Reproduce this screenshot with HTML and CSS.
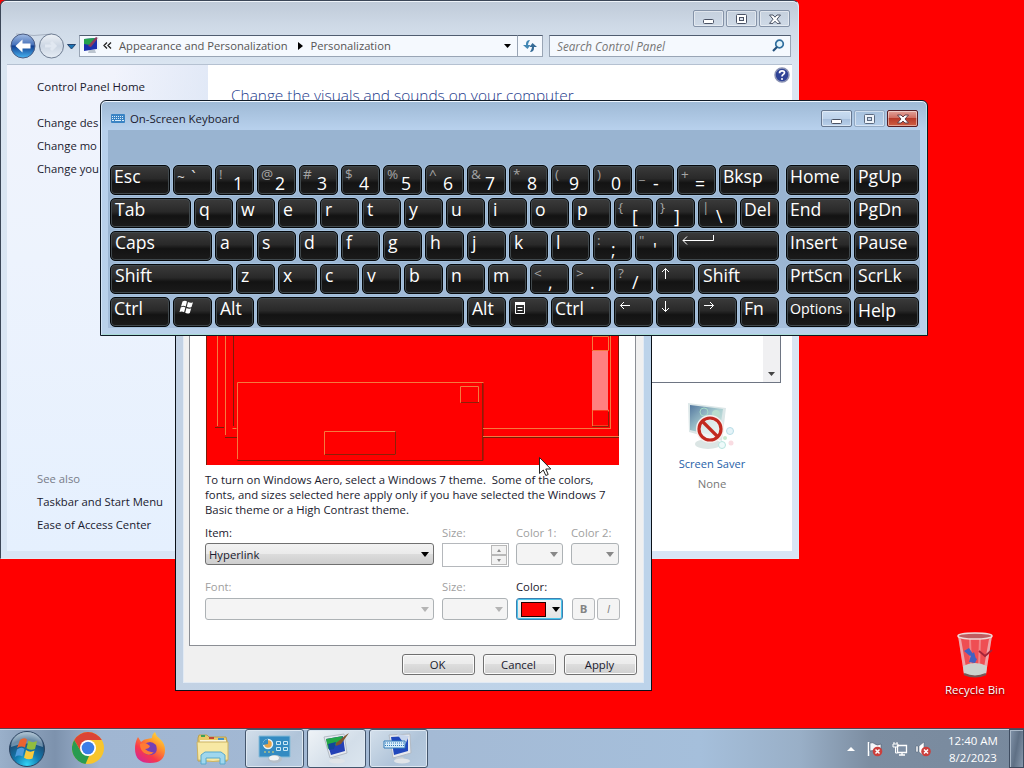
FILE: index.html
```html
<!DOCTYPE html>
<html lang="en">
<head>
    <meta charset="UTF-8">
    <meta name="viewport" content="width=device-width, initial-scale=1.0">
    <title>Desktop</title>
    <link rel="stylesheet" href="styles.css">
</head>
<body>
<div class="desktop">

    <!-- Control Panel -->
    <div class="window control-panel">
        <div class="cp-title">
            <div class="win-btn"><svg width="29" height="17"><rect x="9.5" y="8.5" width="10" height="4" rx="1" fill="#fff" stroke="#4a5264"/></svg></div>
            <div class="win-btn"><svg width="29" height="17"><rect x="9.5" y="3.5" width="10" height="9" rx="1" fill="#fff" stroke="#4a5264"/><rect x="12.5" y="6.5" width="4" height="3" fill="#dde4ee" stroke="#4a5264"/></svg></div>
            <div class="win-btn"><svg width="29" height="17"><path d="M9.5 4h3.500l2 2.200 2-2.200h3.500l-3.500 4.200 3.500 4.200h-3.500l-2-2.200-2 2.200h-3.500l3.500-4.200z" fill="#fff" stroke="#4a5264"/></svg></div>
        </div>
        <div class="cp-nav">
            <svg class="nav-arrows" width="70" height="28" viewBox="0 0 70 28">
                <defs>
                    <linearGradient id="back" x1="0" y1="0" x2="0" y2="1"><stop offset="0" stop-color="#a3bce4"/><stop offset=".45" stop-color="#4772ba"/><stop offset=".5" stop-color="#123f91"/><stop offset="1" stop-color="#49b5f2"/></linearGradient>
                    <linearGradient id="fwd" x1="0" y1="0" x2="0" y2="1"><stop offset="0" stop-color="#eef2f7"/><stop offset=".5" stop-color="#ccd6e3"/><stop offset="1" stop-color="#e6edf5"/></linearGradient>
                </defs>
                <path d="M8 2q18 3 36 0" fill="none" stroke="#a7b2c2"/>
                <circle cx="15" cy="14" r="12" fill="url(#back)" stroke="#4c5d83"/>
                <path d="M7.500 14l7-6.500v4h8v5h-8v4z" fill="#fff"/>
                <circle cx="43.500" cy="14" r="12" fill="url(#fwd)" stroke="#6f7d92"/>
                <path d="M37 14h10m-4-4l4 4-4 4" fill="none" stroke="#e1e8f1" stroke-width="3"/>
                <path d="M59.500 12.500h8l-4 4.500z" fill="#1b75b5" stroke="#27456f"/>
            </svg>
            <div class="address">
                <svg width="18" height="18" viewBox="0 0 18 18"><path d="M1 2l13-1v11l-13 2z" fill="#1a2fae"/><path d="M1 2l11-1-5 7-6-1z" fill="#24a24e"/><path d="M5 9l8-9 2 1-7 9z" fill="#8b3a5c"/><path d="M6 13h6l1 3h-8z" fill="#bcc5cf"/><path d="M15 0v13" stroke="#e4e8ef"/></svg>
                <svg class="chev" width="9" height="7"><path d="M4 0.500L1 3.500l3 3M8 0.500L5 3.500l3 3" fill="none" stroke="#222" stroke-width="1.300"/></svg>
                <span class="crumb">Appearance and Personalization</span>
                <svg class="tri" width="5" height="8"><path d="M0 0l5 4-5 4z"/></svg>
                <span class="crumb">Personalization</span>
                <svg class="drop" width="7" height="4"><path d="M0 0h7l-3.500 4z"/></svg>
            </div>
            <div class="refresh"><svg width="16" height="14" viewBox="0 0 16 14"><path d="M8 1q-4 0-4 4v1h-3l4.500 4 3-4h-2.500q0-2 2-5z" fill="#4287b4"/><path d="M8 13q4 0 4-4v-1h3l-4.500-4-3 4h2.500q0 2-2 5z" fill="#356b97"/></svg></div>
            <div class="search">
                <span>Search Control Panel</span>
                <svg width="13" height="13" viewBox="0 0 13 13"><circle cx="7.500" cy="5" r="3.800" fill="#e3f4fb" stroke="#2f6e9e" stroke-width="1.700"/><path d="M5 8l-4 4" stroke="#24507c" stroke-width="2.200"/></svg>
            </div>
        </div>
        <div class="cp-body">
            <div class="side">
                <a class="home">Control Panel Home</a>
                <a>Change des</a>
                <a>Change mo</a>
                <a>Change you</a>
                <div class="see-also">See also</div>
                <a>Taskbar and Start Menu</a>
                <a>Ease of Access Center</a>
            </div>
            <div class="main">
                <svg class="help" width="16" height="16" viewBox="0 0 16 16"><circle cx="8" cy="8" r="7" fill="#2f4396" stroke="#8b93b4" stroke-width="1.500"/><path d="M5.500 6.300q0-2.500 2.500-2.500t2.500 2q0 1-1.300 1.800-1.200.7-1.200 1.900" fill="none" stroke="#fff" stroke-width="1.700"/><circle cx="8" cy="12" r="1" fill="#fff"/></svg>
                <h1>Change the visuals and sounds on your computer</h1>
                <div class="themes"><div class="themes-scroll"><svg width="7" height="4"><path d="M0 0h7l-3.500 4z" fill="#444"/></svg></div></div>
                <div class="saver">
                    <svg width="50" height="50" viewBox="0 0 50 50">
                        <defs><linearGradient id="scr" x1="0" y1="0" x2="1" y2="1"><stop offset="0" stop-color="#54789f"/><stop offset=".5" stop-color="#a9cdd0"/><stop offset="1" stop-color="#dff0e8"/></linearGradient></defs>
                        <path d="M1 1l38 5-4 33-33-9z" fill="#dce7e8"/>
                        <path d="M3 3l33 4-4 28-29-7z" fill="url(#scr)"/>
                        <ellipse cx="21" cy="42" rx="13" ry="5" fill="#dbe5e4"/>
                        <circle cx="17" cy="10" r="4" fill="none" stroke="#a4dac6"/><circle cx="29" cy="12" r="4" fill="#b8ddcd"/>
                        <circle cx="43" cy="29" r="3.500" fill="#e4f3f8" stroke="#b8dde6"/><circle cx="35" cy="43" r="3.500" fill="#eefafa" stroke="#b8e5df"/><circle cx="44" cy="41" r="2.500" fill="#f9dce2"/><circle cx="38" cy="36" r="2" fill="#c8e9cf"/>
                        <circle cx="23" cy="27" r="11.500" fill="#fff" fill-opacity=".55" stroke="#f6efed" stroke-width="5"/>
                        <circle cx="23" cy="27" r="11" fill="none" stroke="#c22a20" stroke-width="3.200"/>
                        <path d="M15 19l16 16" stroke="#c22a20" stroke-width="3.200"/>
                    </svg>
                    <a>Screen Saver</a>
                    <span>None</span>
                </div>
            </div>
        </div>
    </div>

    <!-- Window Color and Appearance -->
    <div class="window dialog">
        <div class="dlg-client">
            <div class="tab-page">
                <svg class="preview" width="413" height="329" viewBox="206 136 413 329">
                    <rect x="206" y="136" width="413" height="329" fill="#f00"/>
                    <g fill="none" stroke="#7b1b08">
                        <path d="M206.500 136v329M233.500 136v290M215 427.500h9M225 437.500h12M483 437.500h136M237.500 460.500h245.500v-77"/>
                        <path d="M460.500 402.500h18v-16M324.500 454.500h71v-23M592.500 350.500h16v-14M592.500 426.500h16v-16M618.500 136v300"/>
                    </g>
                    <g fill="none" stroke="#f4793f">
                        <path d="M217.500 136v290M225.500 136v299M232.500 428.500h4M483 428.500h127M610.500 136v293M483 436.500h136M237.500 459v-76.500h246"/>
                        <path d="M460.500 402.500v-16h18v16zM324.500 454.500v-23h71v23zM592.500 350.500v-14h16v14zM592.500 426v-16h16v16z"/>
                    </g>
                    <path d="M461 402.500h18M325 454.500h70.500v-23M482.500 383v77M592.500 426.500h16v-15" fill="none" stroke="#8c2008"/>
                    <rect x="592" y="351" width="16" height="59" fill="#ff8080"/>
                </svg>
                <p>To turn on Windows Aero, select a Windows 7 theme.&nbsp; Some of the colors,<br>fonts, and sizes selected here apply only if you have selected the Windows 7<br>Basic theme or a High Contrast theme.</p>
                <div class="fields">
                    <div class="field"><label>Item:</label><div class="combo active"><span>Hyperlink</span><i class="arrow"></i></div></div>
                    <div class="field off"><label>Size:</label><div class="spin"><div><i class="up"></i></div><div><i class="down"></i></div></div></div>
                    <div class="field off"><label>Color 1:</label><div class="combo"><i class="arrow"></i></div></div>
                    <div class="field off"><label>Color 2:</label><div class="combo"><i class="arrow"></i></div></div>
                </div>
                <div class="fields second">
                    <div class="field off"><label>Font:</label><div class="combo pale"><i class="arrow"></i></div></div>
                    <div class="field off"><label>Size:</label><div class="combo pale"><i class="arrow"></i></div></div>
                    <div class="field"><label>Color:</label><div class="combo color"><b class="swatch"></b><i class="arrow"></i></div></div>
                    <div class="styles"><div class="sq bold">B</div><div class="sq ital">I</div></div>
                </div>
            </div>
            <div class="buttons">
                <div class="btn">OK</div>
                <div class="btn">Cancel</div>
                <div class="btn">Apply</div>
            </div>
        </div>
    </div>

    <!-- On-Screen Keyboard -->
    <div class="window osk">
        <div class="osk-title">
            <svg width="14" height="9" viewBox="0 0 14 9"><rect width="14" height="9" rx="1" fill="#3b84c4"/><path d="M1 2.500h12M1 4.500h12" stroke="#d9ecfa" stroke-dasharray="1 1"/><path d="M1 6.500h2m1 0h6m1 0h2" stroke="#d9ecfa"/></svg>
            <span>On-Screen Keyboard</span>
            <div class="win-btn"><svg width="29" height="16"><rect x="9.500" y="8.500" width="10" height="4" rx="1" fill="#fff" stroke="#4a5264"/></svg></div>
            <div class="win-btn dim"><svg width="29" height="16"><rect x="9.500" y="3.500" width="10" height="9" rx="1" fill="#eef3fa" stroke="#5b6a80"/><rect x="12.500" y="6.500" width="4" height="3" fill="#c5d4e8" stroke="#5b6a80"/></svg></div>
            <div class="win-btn close"><svg width="29" height="16"><path d="M9.500 4h3.500l2 2 2-2h3.500l-3.500 4 3.500 4h-3.500l-2-2-2 2h-3.500l3.500-4z" fill="#fff" stroke="#62404a"/></svg></div>
        </div>
        <div class="keys">
            <div class="row">
                <div class="key w60">Esc</div>
                <div class="key two flat"><small>~</small><b>`</b></div>
                <div class="key two"><small>!</small><b>1</b></div>
                <div class="key two"><small>@</small><b>2</b></div>
                <div class="key two"><small>#</small><b>3</b></div>
                <div class="key two"><small>$</small><b>4</b></div>
                <div class="key two"><small>%</small><b>5</b></div>
                <div class="key two"><small>^</small><b>6</b></div>
                <div class="key two"><small>&amp;</small><b>7</b></div>
                <div class="key two"><small>*</small><b>8</b></div>
                <div class="key two"><small>(</small><b>9</b></div>
                <div class="key two"><small>)</small><b>0</b></div>
                <div class="key two"><small>_</small><b>-</b></div>
                <div class="key two"><small>+</small><b>=</b></div>
                <div class="key w60">Bksp</div>
                <div class="key nav first">Home</div>
                <div class="key nav">PgUp</div>
            </div>
            <div class="row">
                <div class="key w81">Tab</div>
                <div class="key">q</div>
                <div class="key">w</div>
                <div class="key">e</div>
                <div class="key">r</div>
                <div class="key">t</div>
                <div class="key">y</div>
                <div class="key">u</div>
                <div class="key">i</div>
                <div class="key">o</div>
                <div class="key">p</div>
                <div class="key two"><small>{</small><b>[</b></div>
                <div class="key two"><small>}</small><b>]</b></div>
                <div class="key two"><small>|</small><b>\</b></div>
                <div class="key narrow">Del</div>
                <div class="key nav first">End</div>
                <div class="key nav">PgDn</div>
            </div>
            <div class="row">
                <div class="key w102">Caps</div>
                <div class="key">a</div>
                <div class="key">s</div>
                <div class="key">d</div>
                <div class="key">f</div>
                <div class="key">g</div>
                <div class="key">h</div>
                <div class="key">j</div>
                <div class="key">k</div>
                <div class="key">l</div>
                <div class="key two"><small>:</small><b>;</b></div>
                <div class="key two"><small>"</small><b>'</b></div>
                <div class="key w102"><svg width="34" height="14"><path d="M31.500 3v5.500H1M5 4.500L1 8.500 5 12.500" fill="none" stroke="#fff"/></svg></div>
                <div class="key nav first">Insert</div>
                <div class="key nav">Pause</div>
            </div>
            <div class="row">
                <div class="key w123">Shift</div>
                <div class="key">z</div>
                <div class="key">x</div>
                <div class="key">c</div>
                <div class="key">v</div>
                <div class="key">b</div>
                <div class="key">n</div>
                <div class="key">m</div>
                <div class="key two"><small>&lt;</small><b>,</b></div>
                <div class="key two"><small>&gt;</small><b>.</b></div>
                <div class="key two"><small>?</small><b>/</b></div>
                <div class="key"><svg width="12" height="14"><path d="M4.500 14V3.500M1 7l3.500-3.500L8 7" fill="none" stroke="#fff"/></svg></div>
                <div class="key w81">Shift</div>
                <div class="key nav first">PrtScn</div>
                <div class="key nav">ScrLk</div>
            </div>
            <div class="row">
                <div class="key w60">Ctrl</div>
                <div class="key"><svg width="17" height="18" viewBox="0 0 17 18"><path d="M4.500 3.500q2.500-1.500 4.500 0l-1.300 5q-2.300-1.400-4.700 0zM10 4q2.500 1.400 5 .2l-1.500 4.800q-2.300 1.200-4.700-.2zM2.700 9.500q2.500-1.400 4.700 0l-1.300 4.700q-2.300-1.500-4.600-.2zM8.500 10q2.300 1.300 4.700.2l-1.400 4.700q-2.300 1.200-4.600-.2z" fill="#fff"/></svg></div>
                <div class="key">Alt</div>
                <div class="key space"></div>
                <div class="key">Alt</div>
                <div class="key"><svg width="14" height="17"><path d="M1 4h10v2h-10z" fill="#fff"/><path d="M1.500 4.500h9v11h-9zM1 6.500h10M3.500 9.500h5M3.500 12.500h5" fill="none" stroke="#fff"/></svg></div>
                <div class="key w60">Ctrl</div>
                <div class="key"><svg width="13" height="12"><path d="M11 7.500H1.500M5 4L1.500 7.500 5 11" fill="none" stroke="#fff"/></svg></div>
                <div class="key"><svg width="12" height="14"><path d="M4.500 3v10.500M1 10l3.500 3.500L8 10" fill="none" stroke="#fff"/></svg></div>
                <div class="key"><svg width="13" height="12"><path d="M1 7.500h9.500M7 4l3.500 3.500L7 11" fill="none" stroke="#fff"/></svg></div>
                <div class="key narrow">Fn</div>
                <div class="key nav first opt">Options</div>
                <div class="key nav help-key">Help</div>
            </div>
        </div>
    </div>

    <div class="recycle">
        <svg width="40" height="48" viewBox="0 0 40 48">
            <path d="M3 4h34l-6 39q-11 5-22 0z" fill="#ec5c62" fill-opacity=".85"/>
            <path d="M6 8l6 34-3 1L3 5zM34 8l-6 34 3 1L37 5z" fill="#eec2c4" fill-opacity=".75"/>
            <path d="M15 8l1 28M25 8l-1 28" stroke="#f4989b" stroke-width="2" stroke-opacity=".7"/>
            <path d="M8 35q12-6 24 0l-1 8q-11 4-22 0z" fill="#ccd1cd"/>
            <path d="M9 43q11 5 22 0" stroke="#775555" stroke-width="2" fill="none"/>
            <path d="M9 20l5-3 4 6-3 2M14 31l2-7 6 4-2 4zM16 24l3-3 2 7z" fill="#3f62c4"/>
            <path d="M24 20l6 5 7-6" fill="none" stroke="#a52438" stroke-width="1.800"/>
            <ellipse cx="20" cy="5" rx="17" ry="3" fill="#bf5c60" stroke="#eed9d7" stroke-width="1.500"/>
        </svg>
        <span>Recycle Bin</span>
    </div>

    <div class="taskbar">
        <svg class="start" width="38" height="38" viewBox="0 0 38 38">
            <defs>
                <radialGradient id="orb" cx=".5" cy=".95" r=".9"><stop offset="0" stop-color="#32d4f5"/><stop offset=".4" stop-color="#127bb0"/><stop offset=".8" stop-color="#1d4a72"/><stop offset="1" stop-color="#8aa5ba"/></radialGradient>
            </defs>
            <circle cx="19" cy="19" r="17.500" fill="url(#orb)" stroke="#2c4360"/>
            <path d="M3 17a16 15 0 0 1 32 0q-16-7-32 0z" fill="#cfdee8" fill-opacity=".45"/>
            <path d="M12 10q4-3 7-.5l-2 8q-4-2-8 .5z" fill="#ea6331"/>
            <path d="M20.500 10.500q4 3 8.500.5l-2 8q-4 2-8.500-.8z" fill="#91bd3e"/>
            <path d="M9 19.500q4-3 7.500-.5l-2 7.500q-4-2-7.500.5z" fill="#4d9bdc"/>
            <path d="M18 20q4 3 8.500.5l-2 8q-4 2-8.500-.8z" fill="#f9ca3c"/>
        </svg>
        <svg class="chrome" width="32" height="32" viewBox="0 0 32 32">
            <circle cx="16" cy="16" r="16" fill="#f7c52c"/>
            <path d="M16 8h13.800A16 16 0 0 0 2.200 8l7 12z" fill="#dc4436"/>
            <path d="M2.200 8l7 12 6.800 4h1l-3.500 8A16 16 0 0 1 2.200 8z" fill="#299b50"/>
            <circle cx="16" cy="16" r="8" fill="#fff"/><circle cx="16" cy="16" r="6.300" fill="#3a7de8"/>
        </svg>
        <svg class="firefox" width="32" height="32" viewBox="0 0 32 32">
            <defs><linearGradient id="fox" x1=".9" y1="0" x2=".2" y2="1"><stop offset="0" stop-color="#ffe845"/><stop offset=".35" stop-color="#ff9a2b"/><stop offset=".7" stop-color="#f8384b"/><stop offset="1" stop-color="#d3269a"/></linearGradient></defs>
            <path d="M4 5l3 5q3-3 6-3l5-1q0-4 3-6 1 4 4 6 6 5 6 12 0 13-15 13Q1 31 1 17 1 10 4 5z" fill="url(#fox)"/>
            <path d="M10 13q6-6 12 0 3 9-6 10-7 0-7-6z" fill="#7540b6"/>
            <path d="M6 12q5-3 10 2-1 3-5 3 4 4 9 3-4 5-10 1-4-3-4-9z" fill="#ff7a34"/>
        </svg>
        <svg class="explorer" width="34" height="32" viewBox="0 0 34 32">
            <path d="M2 4l1-3h8l2 2h17l1 4v20H2z" fill="#e9c968" stroke="#b8a052"/>
            <path d="M4 6h26v3H4z" fill="#f9f6df"/><path d="M5 2h4" stroke="#3da257" stroke-width="2"/><path d="M13 4h5" stroke="#c44734" stroke-width="2"/><path d="M22 5h6" stroke="#4690c5" stroke-width="2"/>
            <path d="M1 8h31v18q-15 3-30 0z" fill="#f7e8a4" stroke="#ccb364"/>
            <path d="M5 30v-9l4-3h16l4 3v9h-5v-6H10v6z" fill="#9fd7ee" stroke="#58a9cd"/>
        </svg>
        <div class="task-btns">
            <div class="task">
                <svg width="34" height="30" viewBox="0 0 34 30"><path d="M1 2h31v21H1z" fill="#348bc2" stroke="#86bbd8"/><circle cx="10" cy="10" r="4.500" fill="#e6a54b" stroke="#e8f3f8" stroke-width="1.500"/><path d="M10 10V5a5 5 0 0 0-5 6z" fill="#348bc2"/><path d="M18.500 7.500h4v3h-4zM25.500 7.500h4v3h-4zM18.500 13.500h4v3h-4zM25.500 13.500h4v3h-4z" fill="none" stroke="#cbe8f5"/><path d="M7 17v2m4-2v2m4-2v2" stroke="#e8d66b"/><ellipse cx="17" cy="25" rx="7" ry="4" fill="#b5bfc8"/><ellipse cx="16" cy="24" rx="5" ry="2.500" fill="#f1f3f5"/></svg>
            </div>
            <div class="task current">
                <svg width="34" height="32" viewBox="0 0 34 32"><path d="M4 4l20-3 3 19-17 5z" fill="#e7e9ee" stroke="#b2bac4"/><path d="M6 6l17-3 2 15-14 4z" fill="#2440b6"/><path d="M6 6l17-3-4 8-6 2-5 3z" fill="#24a846"/><path d="M8 11l8-2-2 7-5 1z" fill="#134699"/><path d="M16 10L26 2l3-2-8 11-5 2z" fill="#82562e"/><path d="M13 24h6l3 4h-12z" fill="#c8ced4"/><ellipse cx="17" cy="28" rx="8" ry="2.500" fill="#e0e4e8"/></svg>
            </div>
            <div class="task">
                <svg width="34" height="32" viewBox="0 0 34 32"><path d="M7 2l21-1 1 19-18 5z" fill="#e7e9ee" stroke="#b2bac4"/><path d="M9 4l17-1v15l-14 4z" fill="#2148bc"/><path d="M15 1l12 2-4 9z" fill="#c7d5ec"/><path d="M2 8h21v7H2z" fill="#d9edfa" stroke="#307bb9"/><path d="M3 10h19M3 12.500h19" stroke="#307bb9" stroke-dasharray="1 1"/><path d="M15 24h6l3 4h-12z" fill="#c8ced4"/><ellipse cx="20" cy="28" rx="8" ry="2.500" fill="#e0e4e8"/></svg>
            </div>
        </div>
        <div class="tray">
            <svg width="8" height="5"><path d="M0 5l4-4 4 4z" fill="#fff"/></svg>
            <svg class="flag" width="16" height="16" viewBox="0 0 16 16"><path d="M1.500 1v14" stroke="#fff" stroke-width="1.500"/><path d="M3 2q3-1 5 1t6 0v7q-4 1-6 0t-5 0z" fill="#f4f6f9" stroke="#48576b" stroke-width=".6"/><circle cx="10.500" cy="10.500" r="4.800" fill="#cc3f3c"/><path d="M8.500 8.500l4 4m0-4l-4 4" stroke="#fff" stroke-width="1.500"/></svg>
            <svg class="net" width="16" height="16" viewBox="0 0 16 16"><path d="M5.500 4.500h9v7h-9zM7 14h6M10 12v2" fill="#7e8fa4" stroke="#fff" stroke-width="1.300"/><path d="M1 3h5v3H1zM2 1v2m3-2v2M3.500 6v6h2" fill="none" stroke="#fff"/></svg>
            <svg class="vol" width="16" height="16" viewBox="0 0 16 16"><path d="M1 5h2v6H1zM4 5l5-4v14l-5-4z" fill="#fff" stroke="#536277" stroke-width=".5"/><circle cx="11" cy="10.500" r="4.800" fill="#cc3f3c"/><path d="M9 8.500l4 4m0-4l-4 4" stroke="#fff" stroke-width="1.500"/></svg>
            <div class="clock"><span>12:40 AM</span><span>8/2/2023</span></div>
            <div class="peek"></div>
        </div>
    </div>

    <svg class="cursor" width="13" height="20" viewBox="0 0 13 20"><path d="M.5.500v16l3.800-3.500 2.500 5.500 2.400-1-2.400-5.500h5z" fill="#fff" stroke="#222"/></svg>
</div>
</body>
</html>
```
FILE: styles.css
```css
* {
    box-sizing: border-box;
}

body {
    margin: 0;
    font-family: "Open Sans", "Noto Sans", sans-serif;
    font-size: 11.3px;
    color: #1a1a2e;
}

svg {
    display: block;
    flex: none;
}

.desktop {
    position: relative;
    width: 1024px;
    height: 768px;
    overflow: hidden;
    background: #f00;
}

.window {
    position: absolute;
    display: flex;
    flex-direction: column;
}

.win-btn {
    width: 31px;
    height: 17px;
    border: 1px solid #8593a8;
    border-radius: 2px;
    box-shadow: inset 0 0 0 1px rgba(255, 255, 255, 0.45);
}

/* Control Panel */
.control-panel {
    left: 0;
    top: 0;
    width: 799px;
    height: 559px;
    padding: 0 6px 7px 6px;
    border: 1px solid #3b4657;
    border-right-color: #dfeaf4;
    border-bottom-color: #dfeaf4;
    border-radius: 6px 6px 0 0;
    box-shadow: inset 0 1px 0 #eef3f9;
    background: linear-gradient(#bfcad8 0, #cfdae7 26px, #dae5f1 64px, #d8e5f5);
}

.cp-title {
    display: flex;
    justify-content: flex-end;
    gap: 2px;
    height: 32px;
    padding: 9px 2px 0 0;
}

.cp-nav {
    display: flex;
    align-items: center;
    height: 32px;
    padding: 0 1px 5px 0;
    margin-top: -1px;
}

.nav-arrows {
    margin: 0 2px 0 1px;
}

.address, .refresh, .search {
    display: flex;
    align-items: center;
    height: 22px;
    border: 1px solid #99a5b5;
    border-top-color: #505d70;
    background: #f5f9fe;
    color: #555;
}

.address {
    width: 439px;
    padding: 0 6px 0 3px;
    margin-left: -1px;
}

.chev {
    margin: 0 6px 0 2px;
}

.crumb {
    font-size: 11.2px;
    margin-left: 1px;
}

.tri {
    margin: 0 7px 0 10px;
}

.drop {
    margin-left: auto;
}

.refresh {
    width: 26px;
    margin-left: -1px;
    padding-left: 4px;
}

.search {
    flex: 1;
    justify-content: space-between;
    margin-left: 6px;
    padding: 0 5px 0 7px;
    font-style: italic;
    font-size: 11.7px;
    color: #777;
}

.cp-body {
    flex: 1;
    display: flex;
    border-top: 1px solid #b5c1d1;
    background: #fff;
}

.side {
    display: flex;
    flex-direction: column;
    width: 201px;
    padding: 13px 0 0 30px;
    background: linear-gradient(100deg, transparent 50%, rgba(212, 224, 242, 0.6)) top / 100% 90px no-repeat, linear-gradient(#f1f3fc, #edf3fd 40%, #e5f0fe);
    line-height: 17px;
    white-space: nowrap;
    overflow: hidden;
}

.side a {
    margin-bottom: 6px;
}

.side .home {
    font-size: 11.5px;
    margin-bottom: 19px;
}

.see-also {
    margin: 287px 0 6px;
    color: #777c88;
}

.main {
    position: relative;
    flex: 1;
    padding: 20px 11px 0 23px;
}

.help {
    position: absolute;
    right: 2px;
    top: 2px;
}

.main h1 {
    margin: 0;
    font-size: 15.4px;
    line-height: 22px;
    font-weight: 300;
    color: #1d3a8c;
    white-space: nowrap;
}

.themes {
    height: 265px;
    margin-top: 11px;
    border: 1px solid #6e7583;
    display: flex;
    justify-content: flex-end;
}

.themes-scroll {
    width: 17px;
    padding: 0 0 6px 5px;
    background: #f0f0f2;
    display: flex;
    align-items: flex-end;
}

.saver {
    display: flex;
    flex-direction: column;
    align-items: center;
    width: 100px;
    margin: 19px 0 0 431px;
    line-height: 20px;
    color: #777;
}

.saver svg {
    margin-bottom: 2px;
}

.saver a {
    font-size: 11.1px;
    color: #1f5fa8;
}

/* Dialog */
.dialog {
    left: 175px;
    top: 120px;
    width: 477px;
    height: 571px;
    padding: 7px;
    border: 1px solid #0a1018;
    background: linear-gradient(90deg, #c3d2e4, #bcd3ea);
}

.dlg-client {
    flex: 1;
    display: flex;
    flex-direction: column;
    background: #f0f0f0;
    border: 1px solid #e2eaf4;
    padding: 0 5px;
}

.tab-page {
    width: 447px;
    height: 517px;
    padding: 6px 15px 0;
    border: 1px solid #8b8e94;
    background: #fff;
}

.preview {
    margin-left: 1px;
}

.tab-page p {
    margin: 7px 0 8px;
    font-size: 11.35px;
    line-height: 15px;
    white-space: nowrap;
}

.fields {
    display: grid;
    grid-template-columns: 229px 66px 47px 48px;
    column-gap: 8px;
    height: 54px;
}

.fields label {
    display: block;
    height: 18px;
    line-height: 15px;
    white-space: nowrap;
}

.second label {
    height: 19px;
}

.off label {
    color: #a0a0a0;
}

.combo {
    display: flex;
    align-items: center;
    height: 22px;
    padding: 0 4px 0 3px;
    border: 1px solid #adb2b5;
    border-radius: 3px;
    background: #f4f4f4;
}

.arrow {
    width: 0;
    height: 0;
    margin-left: auto;
    border: 4.5px solid transparent;
    border-top: 5px solid #888;
    border-bottom: 0;
}

.combo.active {
    border-color: #707070;
    background: linear-gradient(#f2f2f2, #ebebeb 48%, #dcdcdc 50%, #cecece);
}

.active .arrow, .color .arrow {
    border-top-color: #000;
}

.pale .arrow {
    border-top-color: #b4b4b4;
}

.combo.color {
    padding: 0 2px 0 4px;
    border: 1px solid #3c7fb1;
    box-shadow: inset 0 0 0 1px #49c4ea;
    background: linear-gradient(#f4f4f4, #e3e3e3);
}

.swatch {
    width: 25px;
    height: 15px;
    border: 1px solid #200;
    background: #f00;
}

.spin {
    width: 67px;
    height: 24px;
    padding: 1px;
    border: 1px solid #b5b8bc;
    display: flex;
    flex-direction: column;
    align-items: flex-end;
}

.spin div {
    display: flex;
    align-items: center;
    justify-content: center;
    width: 16px;
    height: 10px;
    border: 1px solid #b8b8b8;
    background: #f2f2f2;
}

.spin i {
    border: 2.5px solid transparent;
}

.spin .up {
    border-top: 0;
    border-bottom: 3px solid #8c8c8c;
}

.spin .down {
    border-bottom: 0;
    border-top: 3px solid #8c8c8c;
}

.styles {
    display: flex;
    gap: 2px;
    padding: 19px 0 0 1px;
}

.sq {
    flex: none;
    width: 23px;
    height: 22px;
    line-height: 20px;
    text-align: center;
    border: 1px solid #b5b8bb;
    border-radius: 3px;
    background: #f4f4f4;
    color: #838383;
}

.bold {
    font-weight: bold;
}

.ital {
    font-style: italic;
}

.buttons {
    display: flex;
    justify-content: flex-end;
    gap: 8px;
    padding-top: 8px;
    margin-right: 1px;
}

.btn {
    width: 73px;
    height: 21px;
    padding-right: 2px;
    line-height: 19px;
    text-align: center;
    border: 1px solid #707070;
    border-radius: 3px;
    box-shadow: inset 0 0 0 1px #fbfbfb;
    background: linear-gradient(#f2f2f2, #ebebeb 50%, #dddddd 50%, #cfcfcf);
}

/* On-Screen Keyboard */
.osk {
    left: 100px;
    top: 100px;
    width: 828px;
    height: 236px;
    padding: 0 7px 7px;
    border: 1px solid #101a26;
    border-radius: 6px 6px 0 0;
    box-shadow: inset 0 1px 0 #eef6ff, inset 1px 0 0 #d3e5f7, inset -1px 0 0 #b7e3ec, inset 0 -1px 0 #a9dcd5;
    background: linear-gradient(#9eb9d5, #b7d0ec 28px, #b9d1ea);
}

.osk-title {
    display: flex;
    height: 29px;
    padding: 9px 2px 0 2px;
}

.osk-title > svg {
    margin: 4px 5px 0 1px;
}

.osk-title span {
    flex: 1;
    font-size: 11.4px;
    line-height: 17px;
}

.osk-title .win-btn {
    height: 17px;
    margin-left: 2px;
    border-color: #66778f;
    background: linear-gradient(#c9dcf1, #bdd2ea 50%, #a4bddb 50%, #b9d0ea);
}

.osk-title .dim {
    border-color: #93a9c3;
    background: none;
}

.osk-title .close {
    border-color: #571d24;
    background: linear-gradient(#e2a39a, #cf6a5d 48%, #b83a29 50%, #cf5f43);
}

.keys {
    flex: 1;
    display: flex;
    flex-direction: column;
    gap: 3px;
    padding: 35px 0 0 2px;
    background: linear-gradient(#99b4d1 60%, #a6bedb);
}

.row {
    display: flex;
    gap: 3px;
}

.key {
    flex: none;
    width: 39px;
    height: 30px;
    padding: 0 0 0 4px;
    border: 1px solid #05080b;
    border-radius: 5px;
    box-shadow: inset 0 0 0 1px #41494d, 0 0 0 1px #a5c1dc;
    background: linear-gradient(#3b3b3b, #292929 45%, #131313 60%, #1b1b1b);
    color: #fff;
    font-size: 17.6px;
    line-height: 21px;
    white-space: nowrap;
}

.w60 {
    width: 60px;
    padding-left: 3px;
}

.w81 {
    width: 81px;
}

.w102 {
    width: 102px;
}

.w123 {
    width: 123px;
}

.space {
    width: 207px;
}

.narrow {
    padding-left: 3px;
}

.nav {
    width: 65px;
    padding-left: 3px;
}

.first {
    margin-left: 4px;
}

.opt {
    font-size: 14.2px;
}

.help-key {
    line-height: 24px;
}

.two {
    display: flex;
    padding-left: 3px;
}

.two small {
    width: 14px;
    font-size: 13.500px;
    line-height: 17px;
    color: #a5a5a5;
}

.two b {
    font-weight: normal;
    line-height: 35px;
}

.flat small, .flat b {
    line-height: 23px;
    color: #ddd;
}

/* Desktop */
.recycle {
    position: absolute;
    left: 935px;
    top: 631px;
    width: 80px;
    display: flex;
    flex-direction: column;
    align-items: center;
    line-height: 21px;
    color: #fff;
    text-shadow: 0 1px 2px #500;
}

.recycle span {
    font-size: 11.5px;
}

.cursor {
    position: absolute;
    left: 539px;
    top: 457px;
}

.taskbar {
    position: absolute;
    left: 0;
    top: 728px;
    width: 1024px;
    height: 40px;
    display: flex;
    align-items: center;
    border-top: 1px solid #5b4353;
    box-shadow: inset 0 1px 0 #c5d2e0;
    background: linear-gradient(90deg, #9ab0ca 0, #7d92ad 55px, #a0b6d2 100px, #a4bad5 430px, #a5bfdb 700px, #99afc7 800px, #7c8da1 870px, #78899d);
}

.start {
    margin-left: 8px;
}

.chrome {
    margin: 0 0 2px 26px;
}

.firefox {
    margin: 0 0 2px 30px;
}

.explorer {
    margin: 2px 0 0 30px;
}

.task-btns {
    display: flex;
    gap: 3px;
    margin-left: 15px;
    height: 39px;
}

.task {
    display: flex;
    align-items: center;
    justify-content: center;
    width: 59px;
    border: 1px solid #44566d;
    border-radius: 3px;
    box-shadow: inset 0 0 0 1px #dde7f1;
    background: linear-gradient(135deg, #d3dfeb, #b0c4d9 60%, #b6cadf);
}

.current {
    background: linear-gradient(135deg, #eff3f7, #d3dee9 60%, #dce6ef);
}

.tray {
    flex: 1;
    display: flex;
    align-items: center;
    justify-content: flex-end;
    height: 39px;
    color: #fff;
}

.flag {
    margin-left: 12px;
}

.net {
    margin-left: 9px;
}

.vol {
    margin-left: 7px;
}

.clock {
    display: flex;
    flex-direction: column;
    align-items: center;
    width: 60px;
    margin: 0 6px 0 12px;
    font-size: 11.5px;
    line-height: 17px;
}

.peek {
    width: 15px;
    height: 39px;
    border: 1px solid #3e4c60;
    box-shadow: inset 1px 1px 0 #aab8c8;
    background: linear-gradient(100deg, #8294aa, #5f7085 50%, #8798ac);
}
```
